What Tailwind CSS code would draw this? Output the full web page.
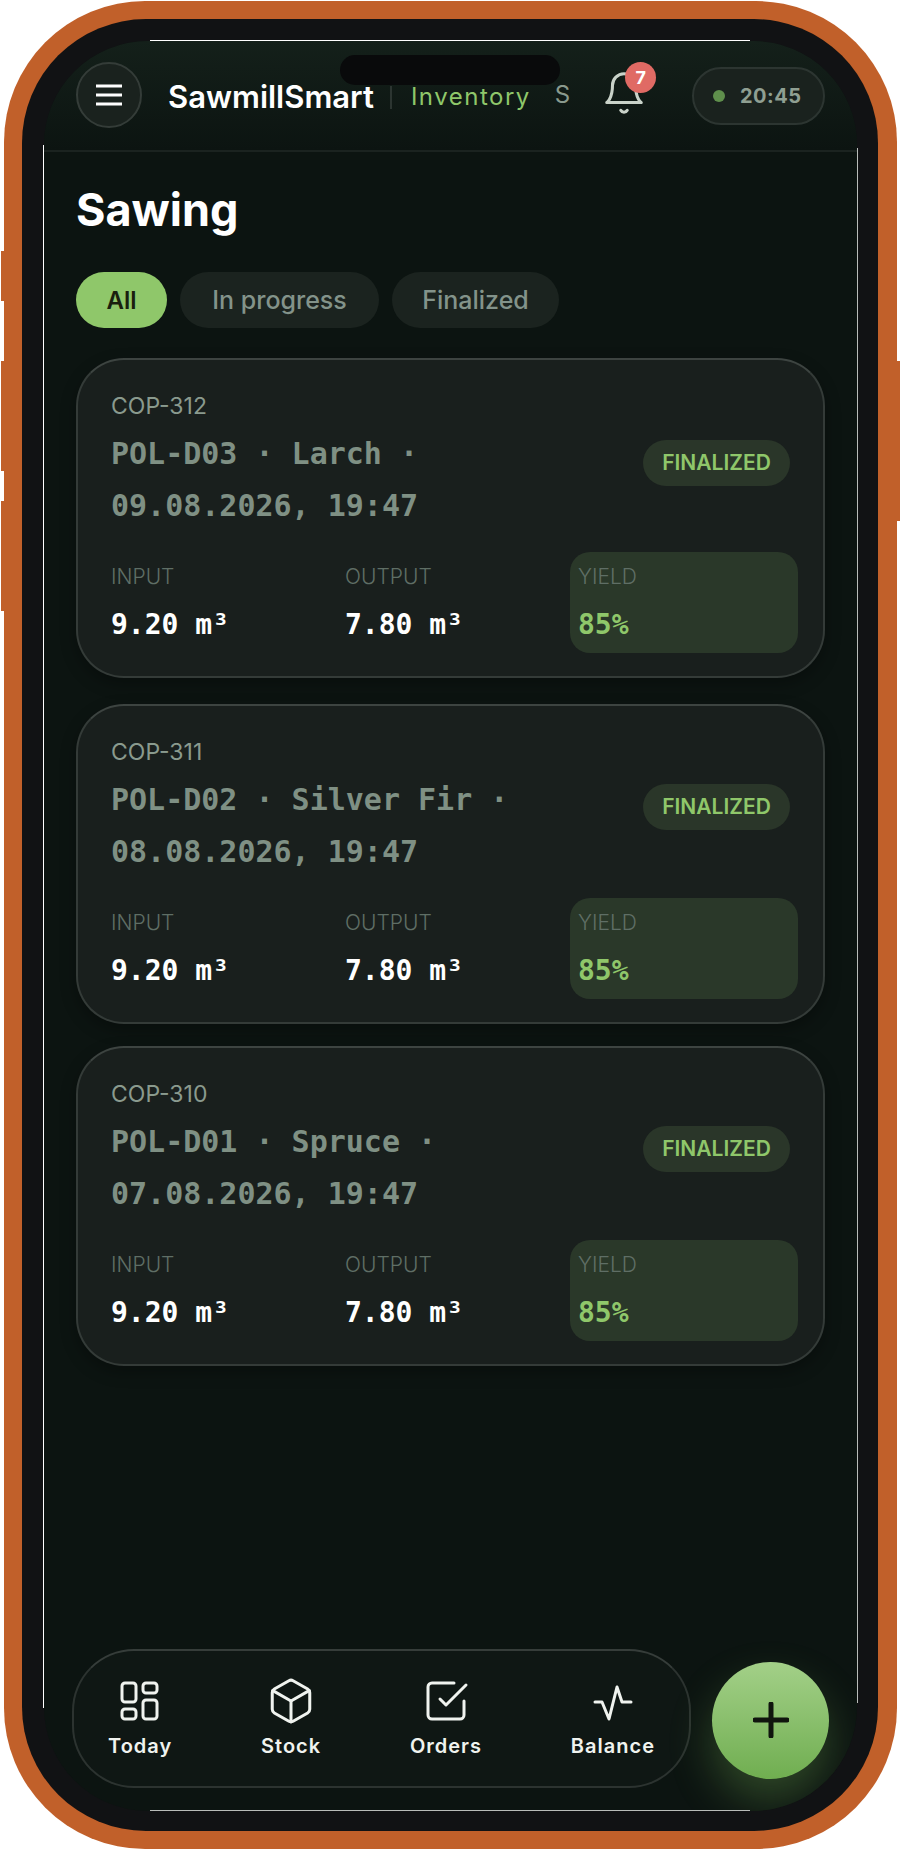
<!DOCTYPE html>
<html lang="en">
<head>
    <meta charset="UTF-8">
    <meta name="viewport" content="width=device-width, initial-scale=1.0">
    <title>SawmillSmart - Sawing</title>
    <script src="https://cdn.jsdelivr.net/npm/@tailwindcss/browser@4"></script>
</head>
<body class="bg-white font-['Inter',sans-serif]">
    <div class="relative w-[901px] h-[1851px] pl-[4px] pt-[1px]">
        <!-- Side buttons -->
        <div class="absolute left-[1px] top-[251px] w-[5px] h-[50px] bg-[#c1602a]"></div>
        <div class="absolute left-[1px] top-[361px] w-[5px] h-[110px] bg-[#c1602a]"></div>
        <div class="absolute left-[1px] top-[501px] w-[5px] h-[110px] bg-[#c1602a]"></div>
        <div class="absolute left-[895px] top-[361px] w-[5px] h-[160px] bg-[#c1602a]"></div>

        <!-- Phone frame -->
        <div class="relative w-[893px] h-[1848px] rounded-[141px] bg-[#c1602a] pl-[18px] pr-[19px] py-[18px]">
            <div class="w-[856px] h-[1812px] rounded-[124px] bg-[#111214] pl-[22px] pr-[21px] pt-[22px] pb-[20px]">
                <div class="relative w-[813px] h-[1770px] rounded-[104px] bg-[#0c1411] overflow-hidden flex flex-col">

                    <!-- Header -->
                    <header class="relative shrink-0 h-[111px] flex items-center pl-[32px] pr-[32px] pb-[1px] border-b-2 border-[#1b2320] bg-gradient-to-b from-[#14201a] to-[#0c1411]">
                        <div class="absolute left-[296px] top-[14px] w-[220px] h-[30px] rounded-full bg-[#090a0b]"></div>
                        <button class="w-[66px] h-[66px] rounded-full bg-[#1a221e] border-2 border-[#343c38] flex items-center justify-center">
                            <svg width="28" height="24" viewBox="0 0 28 24" fill="none" stroke="#ffffff" stroke-width="3"><path d="M1 3h26M1 12h26M1 21h26"/></svg>
                        </button>
                        <span class="ml-[26px] mt-[3px] text-[31px] leading-none font-semibold text-white">SawmillSmart</span>
                        <span class="ml-[16px] mt-[4px] w-[2px] h-[23px] bg-[#2c3531]"></span>
                        <span class="ml-[19px] mt-[4px] text-[24px] leading-none text-[#8fc76a] tracking-[1.5px]">Inventory</span>
                        <span class="ml-[24px] text-[24px] leading-none text-[#8a9a8e]">S</span>
                        <div class="relative ml-[31px] mb-[4px] w-[46px] h-[46px]">
                            <svg width="46" height="46" viewBox="0 0 24 24" fill="none" stroke="#c9d2c9" stroke-width="1.6" stroke-linecap="round" stroke-linejoin="round"><path d="M6 8a6 6 0 0 1 12 0c0 7 3 9 3 9H3s3-2 3-9"/><path d="M10.3 21a1.94 1.94 0 0 0 3.4 0"/></svg>
                            <span class="absolute left-[24px] top-[-8px] w-[31px] h-[31px] rounded-full bg-[#e06a64] text-white text-[18px] font-bold flex items-center justify-center">7</span>
                        </div>
                        <div class="ml-auto mt-[1px] w-[133px] h-[58px] rounded-full bg-[#1a221e] border-2 border-[#2c3531] flex items-center pl-[19px]">
                            <span class="w-[12px] h-[12px] rounded-full bg-[#5f8f4c]"></span>
                            <span class="ml-[15px] mt-[1px] text-[20px] font-bold text-[#8f9f92] tracking-[0.5px]">20:45</span>
                        </div>
                    </header>

                    <!-- Content -->
                    <main class="px-[32px]">
                        <h1 class="mt-[30px] text-[45px] leading-[56px] font-bold text-white">Sawing</h1>
                        <div class="mt-[34px] flex gap-[13px]">
                            <button class="w-[91px] h-[56px] pt-[1px] rounded-full bg-[#8fc76a] text-[#1a1f0e] text-[24px] font-semibold">All</button>
                            <button class="w-[199px] h-[56px] pt-[1px] rounded-full bg-[#1b231f] text-[#83938a] text-[25px] font-medium">In progress</button>
                            <button class="w-[167px] h-[56px] pt-[1px] rounded-full bg-[#1b231f] text-[#83938a] text-[25px] font-medium">Finalized</button>
                        </div>

                        <!-- Card 1 -->
                        <article class="mt-[30px] w-[749px] h-[320px] rounded-[48px] bg-[#191f1d] border-2 border-[#343b38] border-t-[#3d4441] shadow-[0_6px_16px_rgba(0,0,0,0.3)] pl-[33px] pt-[33px]">
                            <p class="h-[26px] text-[23px] leading-[26px] text-[#8a9a8e]">COP-312</p>
                            <div class="mt-[9px] flex items-start">
                                <p class="w-[500px] text-[30px] leading-[52px] font-bold font-['DejaVu_Sans_Mono',monospace] text-[#7f9084]">POL-D03 · Larch · 09.08.2026, 19:47</p>
                                <span class="mt-[12px] ml-[32px] w-[147px] h-[46px] rounded-full bg-[#2a3629] text-[#8fc76a] text-[21px] font-semibold flex items-center justify-center">FINALIZED</span>
                            </div>
                            <div class="mt-[20px] grid grid-cols-[234px_225px_228px]">
                                <div class="pt-[15px]">
                                    <p class="h-[20px] text-[21px] leading-[20px] font-light text-[#5f6e65]">INPUT</p>
                                    <p class="mt-[21px] h-[34px] text-[28px] leading-[34px] font-bold font-['DejaVu_Sans_Mono',monospace] text-white">9.20 m³</p>
                                </div>
                                <div class="pt-[15px]">
                                    <p class="h-[20px] text-[21px] leading-[20px] font-light text-[#5f6e65]">OUTPUT</p>
                                    <p class="mt-[21px] h-[34px] text-[28px] leading-[34px] font-bold font-['DejaVu_Sans_Mono',monospace] text-white">7.80 m³</p>
                                </div>
                                <div class="h-[101px] rounded-[20px] bg-[#2a3829] pl-[8px] pt-[15px]">
                                    <p class="h-[20px] text-[21px] leading-[20px] font-light text-[#5f6e65]">YIELD</p>
                                    <p class="mt-[21px] h-[34px] text-[28px] leading-[34px] font-bold font-['DejaVu_Sans_Mono',monospace] text-[#8fc76a]">85%</p>
                                </div>
                            </div>
                        </article>

                        <!-- Card 2 -->
                        <article class="mt-[26px] w-[749px] h-[320px] rounded-[48px] bg-[#191f1d] border-2 border-[#343b38] border-t-[#3d4441] shadow-[0_6px_16px_rgba(0,0,0,0.3)] pl-[33px] pt-[33px]">
                            <p class="h-[26px] text-[23px] leading-[26px] text-[#8a9a8e]">COP-311</p>
                            <div class="mt-[9px] flex items-start">
                                <p class="w-[500px] text-[30px] leading-[52px] font-bold font-['DejaVu_Sans_Mono',monospace] text-[#7f9084]">POL-D02 · Silver Fir · 08.08.2026, 19:47</p>
                                <span class="mt-[10px] ml-[32px] w-[147px] h-[46px] rounded-full bg-[#2a3629] text-[#8fc76a] text-[21px] font-semibold flex items-center justify-center">FINALIZED</span>
                            </div>
                            <div class="mt-[20px] grid grid-cols-[234px_225px_228px]">
                                <div class="pt-[15px]">
                                    <p class="h-[20px] text-[21px] leading-[20px] font-light text-[#5f6e65]">INPUT</p>
                                    <p class="mt-[21px] h-[34px] text-[28px] leading-[34px] font-bold font-['DejaVu_Sans_Mono',monospace] text-white">9.20 m³</p>
                                </div>
                                <div class="pt-[15px]">
                                    <p class="h-[20px] text-[21px] leading-[20px] font-light text-[#5f6e65]">OUTPUT</p>
                                    <p class="mt-[21px] h-[34px] text-[28px] leading-[34px] font-bold font-['DejaVu_Sans_Mono',monospace] text-white">7.80 m³</p>
                                </div>
                                <div class="h-[101px] rounded-[20px] bg-[#2a3829] pl-[8px] pt-[15px]">
                                    <p class="h-[20px] text-[21px] leading-[20px] font-light text-[#5f6e65]">YIELD</p>
                                    <p class="mt-[21px] h-[34px] text-[28px] leading-[34px] font-bold font-['DejaVu_Sans_Mono',monospace] text-[#8fc76a]">85%</p>
                                </div>
                            </div>
                        </article>

                        <!-- Card 3 -->
                        <article class="mt-[22px] w-[749px] h-[320px] rounded-[48px] bg-[#191f1d] border-2 border-[#343b38] border-t-[#3d4441] shadow-[0_6px_16px_rgba(0,0,0,0.3)] pl-[33px] pt-[33px]">
                            <p class="h-[26px] text-[23px] leading-[26px] text-[#8a9a8e]">COP-310</p>
                            <div class="mt-[9px] flex items-start">
                                <p class="w-[500px] text-[30px] leading-[52px] font-bold font-['DejaVu_Sans_Mono',monospace] text-[#7f9084]">POL-D01 · Spruce · 07.08.2026, 19:47</p>
                                <span class="mt-[10px] ml-[32px] w-[147px] h-[46px] rounded-full bg-[#2a3629] text-[#8fc76a] text-[21px] font-semibold flex items-center justify-center">FINALIZED</span>
                            </div>
                            <div class="mt-[20px] grid grid-cols-[234px_225px_228px]">
                                <div class="pt-[15px]">
                                    <p class="h-[20px] text-[21px] leading-[20px] font-light text-[#5f6e65]">INPUT</p>
                                    <p class="mt-[21px] h-[34px] text-[28px] leading-[34px] font-bold font-['DejaVu_Sans_Mono',monospace] text-white">9.20 m³</p>
                                </div>
                                <div class="pt-[15px]">
                                    <p class="h-[20px] text-[21px] leading-[20px] font-light text-[#5f6e65]">OUTPUT</p>
                                    <p class="mt-[21px] h-[34px] text-[28px] leading-[34px] font-bold font-['DejaVu_Sans_Mono',monospace] text-white">7.80 m³</p>
                                </div>
                                <div class="h-[101px] rounded-[20px] bg-[#2a3829] pl-[8px] pt-[15px]">
                                    <p class="h-[20px] text-[21px] leading-[20px] font-light text-[#5f6e65]">YIELD</p>
                                    <p class="mt-[21px] h-[34px] text-[28px] leading-[34px] font-bold font-['DejaVu_Sans_Mono',monospace] text-[#8fc76a]">85%</p>
                                </div>
                            </div>
                        </article>
                    </main>

                    <!-- Bottom nav + add button -->
                    <div class="mt-auto pl-[28px] pb-[23px] flex items-center">
                        <nav class="w-[619px] h-[139px] rounded-[62px] bg-[#0f1714] border-2 border-[#2c3330] border-t-[#363d3a] px-[34px] flex justify-between items-start pt-[30px] text-[#f0f3ef] text-[20px] leading-[24px] font-semibold tracking-[1px]">
                            <a class="flex flex-col items-center">
                                <svg width="40" height="40" viewBox="0 0 40 40" fill="none" stroke="currentColor" stroke-width="3" stroke-linejoin="round"><rect x="2" y="2" width="14" height="19" rx="3"/><rect x="23" y="2" width="14" height="10" rx="3"/><rect x="23" y="19" width="14" height="19" rx="3"/><rect x="2" y="28" width="14" height="10" rx="3"/></svg>
                                <span class="mt-[13px]">Today</span>
                            </a>
                            <a class="flex flex-col items-center">
                                <svg class="-mt-[5px]" width="50" height="50" viewBox="0 0 24 24" fill="none" stroke="currentColor" stroke-width="1.45" stroke-linecap="round" stroke-linejoin="round"><path d="M21 8a2 2 0 0 0-1-1.73l-7-4a2 2 0 0 0-2 0l-7 4A2 2 0 0 0 3 8v8a2 2 0 0 0 1 1.73l7 4a2 2 0 0 0 2 0l7-4A2 2 0 0 0 21 16Z"/><path d="m3.3 7 8.7 5 8.7-5"/><path d="M12 22V12"/></svg>
                                <span class="mt-[8px]">Stock</span>
                            </a>
                            <a class="flex flex-col items-center">
                                <svg class="-mt-[4px]" width="48" height="48" viewBox="0 0 24 24" fill="none" stroke="currentColor" stroke-width="1.5" stroke-linecap="round" stroke-linejoin="round"><path d="m9 11 3 3L22 4"/><path d="M21 12v7a2 2 0 0 1-2 2H5a2 2 0 0 1-2-2V5a2 2 0 0 1 2-2h11"/></svg>
                                <span class="mt-[9px]">Orders</span>
                            </a>
                            <a class="flex flex-col items-center">
                                <svg width="40" height="44" viewBox="0 0 40 44" fill="none" stroke="currentColor" stroke-width="3" stroke-linecap="round" stroke-linejoin="round"><path d="M2 21h7l7 17 8-32 5 15h9"/></svg>
                                <span class="mt-[9px]">Balance</span>
                            </a>
                        </nav>
                        <button class="ml-[21px] mt-[3px] w-[117px] h-[117px] rounded-full bg-gradient-to-b from-[#a3d088] to-[#70ae50] shadow-[0_22px_44px_rgba(127,190,90,0.3)] flex items-center justify-center">
                            <svg width="36" height="36" viewBox="0 0 36 36" fill="none" stroke="#10150e" stroke-width="5" stroke-linecap="round"><path d="M18 2v32M2 18h32"/></svg>
                        </button>
                    </div>
                </div>
            </div>

            <!-- Thin light lines along the screen edge -->
            <div class="absolute left-[146px] top-[39px] w-[600px] h-[1px] bg-white"></div>
            <div class="absolute left-[146px] top-[1809px] w-[600px] h-[1px] bg-[#b9bcba]"></div>
            <div class="absolute left-[39px] top-[144px] w-[1px] h-[1563px] bg-white"></div>
            <div class="absolute left-[853px] top-[147px] w-[1px] h-[1555px] bg-[#b9bcba]"></div>
        </div>
    </div>
</body>
</html>
